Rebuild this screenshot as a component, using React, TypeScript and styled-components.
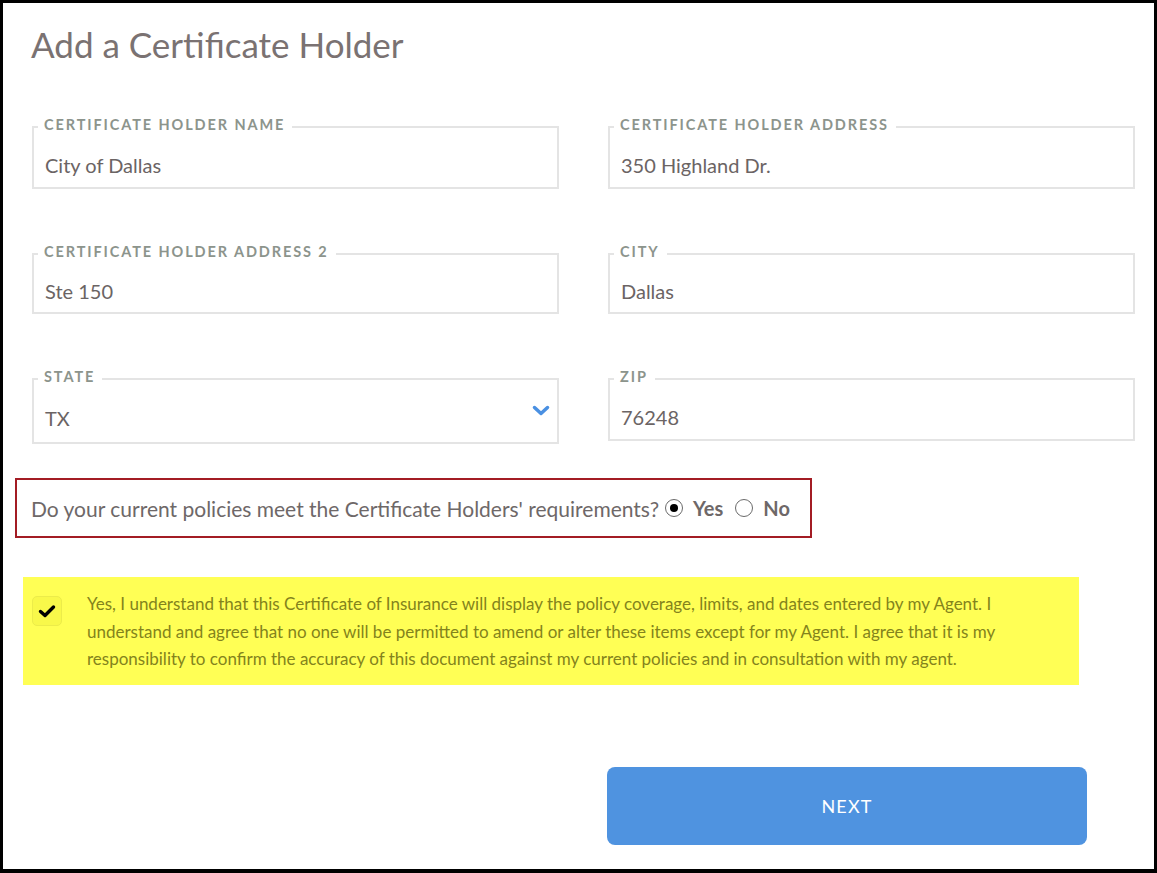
import React from "react";
import styled, { createGlobalStyle } from "styled-components";

const GlobalStyle = createGlobalStyle`
  html, body {
    margin: 0;
    padding: 0;
    background: #ffffff;
  }
  * {
    box-sizing: border-box;
  }
`;

interface FieldProps {
  label: string;
  value: string;
  height: number;
  select?: boolean;
}

const Field: React.FC<FieldProps> = ({ label, value, height, select }) => {
  return (
    <StyledFieldset $height={height}>
      <legend>{label}</legend>
      <span className="value">{value}</span>
      {select && (
        <svg className="chevron" width="18" height="12" viewBox="0 0 18 12">
          <polyline points="2.5,2.5 9,8.5 15.5,2.5" fill="none" stroke="#4a90e2" strokeWidth="3.5" strokeLinecap="round" strokeLinejoin="round" />
        </svg>
      )}
    </StyledFieldset>
  );
};

const RadioOption: React.FC<{ label: string; checked?: boolean }> = ({ label, checked }) => {
  return (
    <StyledRadio>
      <span className={checked ? "dot on" : "dot"} />
      <b>{label}</b>
    </StyledRadio>
  );
};

const App: React.FC = () => {
  return (
    <>
      <GlobalStyle />
      <StyledPage>
        <StyledTitle>Add a Certificate Holder</StyledTitle>
        <StyledGrid>
          <Field label="CERTIFICATE HOLDER NAME" value="City of Dallas" height={70} />
          <Field label="CERTIFICATE HOLDER ADDRESS" value="350 Highland Dr." height={70} />
          <Field label="CERTIFICATE HOLDER ADDRESS 2" value="Ste 150" height={68} />
          <Field label="CITY" value="Dallas" height={68} />
          <Field label="STATE" value="TX" height={73} select />
          <Field label="ZIP" value="76248" height={70} />
        </StyledGrid>
        <StyledQuestion>
          <span>Do your current policies meet the Certificate Holders' requirements?</span>
          <RadioOption label="Yes" checked />
          <RadioOption label="No" />
        </StyledQuestion>
        <StyledAgreement>
          <div className="box">
            <svg width="18" height="14" viewBox="0 0 18 14">
              <polyline points="2.5,7.5 7,11.5 15.5,3" fill="none" stroke="#000" strokeWidth="3.4" strokeLinecap="round" strokeLinejoin="round" />
            </svg>
          </div>
          <p>
            Yes, I understand that this Certificate of Insurance will display the policy coverage, limits, and dates
            entered by my Agent. I understand and agree that no one will be permitted to amend or alter these items
            except for my Agent. I agree that it is my responsibility to confirm the accuracy of this document against
            my current policies and in consultation with my agent.
          </p>
        </StyledAgreement>
        <StyledFooter>
          <StyledButton>NEXT</StyledButton>
        </StyledFooter>
      </StyledPage>
    </>
  );
};

const StyledPage = styled.div`
  width: 1157px;
  height: 873px;
  border: 3px solid #000;
  border-bottom-width: 4px;
  padding: 20px 19px 0 12px;
  font-family: Lato, "Open Sans", sans-serif;
  color: #6e6868;
  overflow: hidden;
`;

const StyledTitle = styled.h1`
  margin: 0 0 0 16px;
  font-size: 35px;
  font-weight: 400;
  line-height: 42px;
  color: #7a7272;
`;

const StyledGrid = styled.div`
  display: grid;
  grid-template-columns: 527px 527px;
  align-items: start;
  column-gap: 49px;
  row-gap: 57px;
  margin: 54px 0 0 17px;
`;

const StyledFieldset = styled.fieldset<{ $height: number }>`
  position: relative;
  margin: 0;
  height: ${(p) => p.$height}px;
  padding: 0 11px;
  border: 2px solid #e4e4e4;
  display: flex;
  align-items: center;

  legend {
    position: relative;
    top: -2px;
    margin-left: -7px;
    padding: 0 7px 0 6px;
    font-size: 14.5px;
    font-weight: 700;
    letter-spacing: 1.9px;
    color: #8c948c;
    line-height: 16px;
  }

  .value {
    font-size: 20px;
    color: #6b6464;
    margin-top: 7px;
  }

  .chevron {
    position: absolute;
    right: 7px;
    top: 18px;
  }
`;

const StyledQuestion = styled.div`
  display: flex;
  align-items: center;
  width: 797px;
  height: 60px;
  margin-top: 34px;
  padding: 0 14px;
  border: 2px solid #a31c24;
  font-size: 21px;
  color: #6e6868;
  white-space: nowrap;
`;

const StyledRadio = styled.label`
  display: flex;
  align-items: center;
  margin-left: 6px;
  margin-right: 6px;

  .dot {
    width: 18px;
    height: 18px;
    border-radius: 50%;
    border: 1.5px solid #6a6a6a;
    margin-right: 10px;
    position: relative;
  }

  .dot.on::after {
    content: "";
    position: absolute;
    top: 3.5px;
    left: 3.5px;
    width: 8px;
    height: 8px;
    border-radius: 50%;
    background: #000;
  }

  b {
    font-weight: 700;
    font-size: 20px;
    color: #6e6868;
  }
`;

const StyledAgreement = styled.div`
  display: flex;
  align-items: flex-start;
  width: 1056px;
  height: 108px;
  margin: 39px 0 0 8px;
  padding: 13px 20px 0 9px;
  background: #ffff55;

  .box {
    flex: 0 0 30px;
    height: 30px;
    margin-top: 6px;
    border: 1.5px solid #ecec4a;
    border-radius: 5px;
    background: #f8f84a;
    display: flex;
    align-items: center;
    justify-content: center;
  }

  p {
    width: 920px;
    margin: 0 0 0 25px;
    font-size: 17px;
    line-height: 27.5px;
    color: #83831c;
  }
`;

const StyledFooter = styled.div`
  display: flex;
  justify-content: flex-end;
  padding-right: 48px;
  margin-top: 82px;
`;

const StyledButton = styled.button`
  width: 480px;
  height: 78px;
  border: none;
  border-radius: 8px;
  background: #4f93e0;
  color: #ffffff;
  font-family: Lato, "Open Sans", sans-serif;
  font-size: 18px;
  letter-spacing: 1.2px;
  cursor: pointer;
`;

export default App;
